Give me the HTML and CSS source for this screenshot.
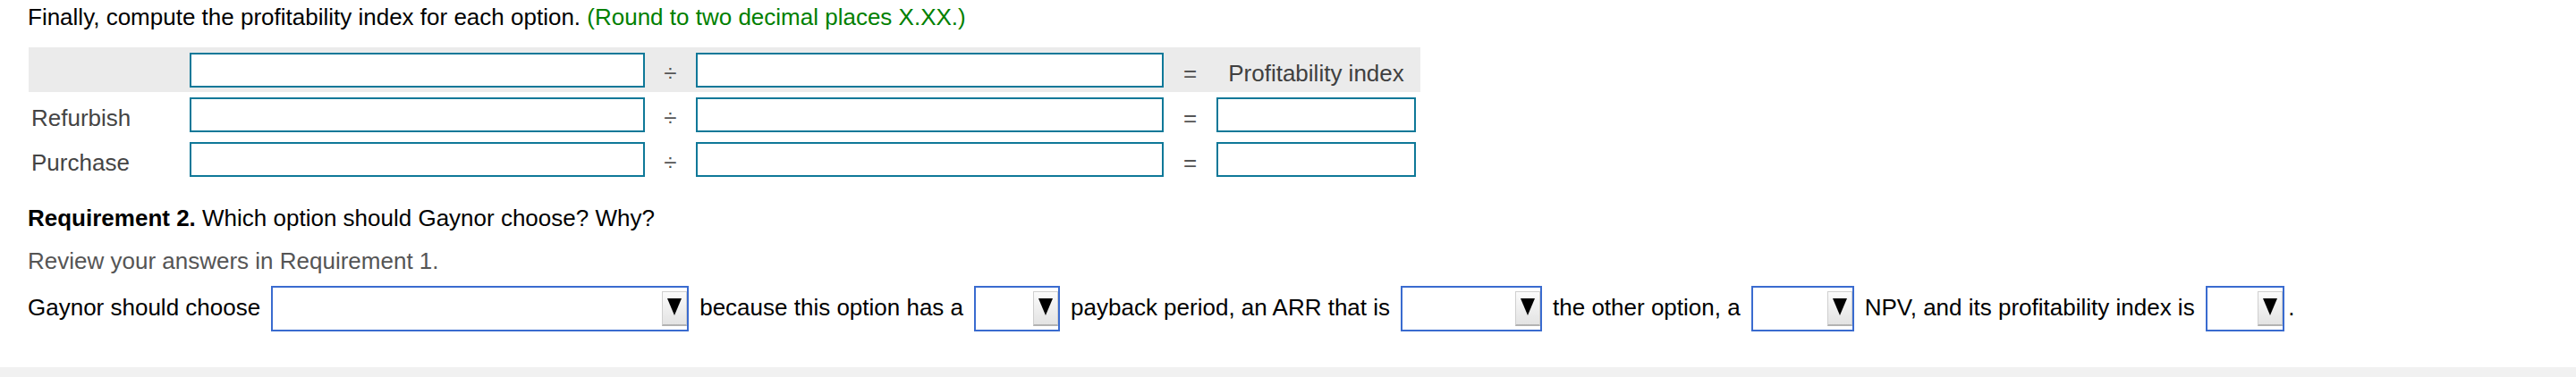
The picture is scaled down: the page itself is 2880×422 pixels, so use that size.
FILE: index.html
```html
<!DOCTYPE html>
<html lang="en">
<head>
<meta charset="utf-8">
<title>Profitability index</title>
<link rel="stylesheet" href="styles.css">
</head>
<body>
<div class="page">
  <p class="intro">Finally, compute the profitability index for each option. <span class="hint">(Round to two decimal places X.XX.)</span></p>

  <div class="pi-table">
    <div class="pi-row head">
      <div class="cell label"></div>
      <div class="cell"><input class="num" type="text"></div>
      <div class="cell op">÷</div>
      <div class="cell"><input class="num" type="text"></div>
      <div class="cell op">=</div>
      <div class="cell result-head">Profitability index</div>
    </div>
    <div class="pi-row">
      <div class="cell label">Refurbish</div>
      <div class="cell"><input class="num" type="text"></div>
      <div class="cell op">÷</div>
      <div class="cell"><input class="num" type="text"></div>
      <div class="cell op">=</div>
      <div class="cell"><input class="num" type="text"></div>
    </div>
    <div class="pi-row">
      <div class="cell label">Purchase</div>
      <div class="cell"><input class="num" type="text"></div>
      <div class="cell op">÷</div>
      <div class="cell"><input class="num" type="text"></div>
      <div class="cell op">=</div>
      <div class="cell"><input class="num" type="text"></div>
    </div>
  </div>

  <p class="req"><b>Requirement 2.</b> Which option should Gaynor choose? Why?</p>
  <p class="review">Review your answers in Requirement 1.</p>

  <div class="answer">
    <span class="txt">Gaynor should choose</span>
    <span class="dd w1"><span class="dd-btn"><span class="tri"></span></span></span>
    <span class="txt">because this option has a</span>
    <span class="dd w2"><span class="dd-btn"><span class="tri"></span></span></span>
    <span class="txt">payback period, an ARR that is</span>
    <span class="dd w3"><span class="dd-btn"><span class="tri"></span></span></span>
    <span class="txt">the other option, a</span>
    <span class="dd w4"><span class="dd-btn"><span class="tri"></span></span></span>
    <span class="txt">NPV, and its profitability index is</span>
    <span class="dd w5"><span class="dd-btn"><span class="tri"></span></span></span>
    <span class="txt period">.</span>
  </div>
</div>
<div class="footer-band"></div>
</body>
</html>
```

FILE: styles.css
```css
html, body {
  margin: 0;
  padding: 0;
  background: #ffffff;
}

body {
  height: 422px;
  overflow: hidden;
  font-family: "Liberation Sans", Arial, sans-serif;
  font-size: 26px;
  line-height: 29px;
  color: #000000;
}

.page {
  padding: 5px 0 0 31px;
  height: 411px;
  box-sizing: border-box;
}

p {
  margin: 0;
}

.intro {
  color: #000000;
}

.hint {
  color: #008000;
}

/* ---------- table ---------- */
.pi-table {
  margin: 19px 0 0 1px;
  width: 1556px;
}

.pi-row {
  display: grid;
  grid-template-columns: 180px 509px 57px 523px 59px 223px;
  height: 50px;
  padding-right: 5px;
  align-items: center;
}

.pi-row.head {
  background: #ebebeb;
}

.cell {
  display: flex;
  align-items: center;
  height: 39px;
}

.cell.label,
.cell.op,
.cell.result-head {
  height: 37px;
  padding-top: 8px;
  box-sizing: border-box;
}

.cell.label {
  padding-left: 3px;
  color: #444444;
}

.cell.op {
  justify-content: center;
  color: #555555;
}

.cell.result-head {
  justify-content: center;
  color: #404040;
}

.num {
  display: block;
  width: 100%;
  height: 39px;
  margin: 0;
  padding: 0 6px;
  box-sizing: border-box;
  border: 2px solid #0e7898;
  border-radius: 0;
  background: #ffffff;
  font: inherit;
  outline: none;
}

/* ---------- requirement 2 ---------- */
.req {
  margin-top: 26.5px;
}

.review {
  margin-top: 19px;
  color: #555555;
}

.answer {
  margin-top: 13px;
  display: flex;
  align-items: center;
  gap: 12px;
  white-space: nowrap;
}

.txt {
  display: block;
  padding-bottom: 2px;
}

.txt.period {
  margin-left: -7.5px;
}

.dd {
  display: flex;
  justify-content: flex-end;
  align-items: center;
  height: 51px;
  box-sizing: border-box;
  border: 2px solid #3a6bcf;
  background: #ffffff;
  flex: none;
}

.dd.w1 { width: 467px; }
.dd.w2 { width: 96px; }
.dd.w3 { width: 158px; }
.dd.w4 { width: 115px; }
.dd.w5 { width: 88px; }

.dd-btn {
  display: flex;
  justify-content: center;
  align-items: flex-start;
  width: 28px;
  height: 39px;
  box-sizing: border-box;
  padding-top: 7px;
  border: 1px solid #cfcfcf;
  border-bottom: 2px solid #b3b3b3;
  background: linear-gradient(#fbfbfb, #e3e3e3);
}

.tri {
  width: 0;
  height: 0;
  border-left: 8px solid transparent;
  border-right: 8px solid transparent;
  border-top: 19px solid #000000;
}

.footer-band {
  height: 11px;
  background: #f1f1f1;
}
```
